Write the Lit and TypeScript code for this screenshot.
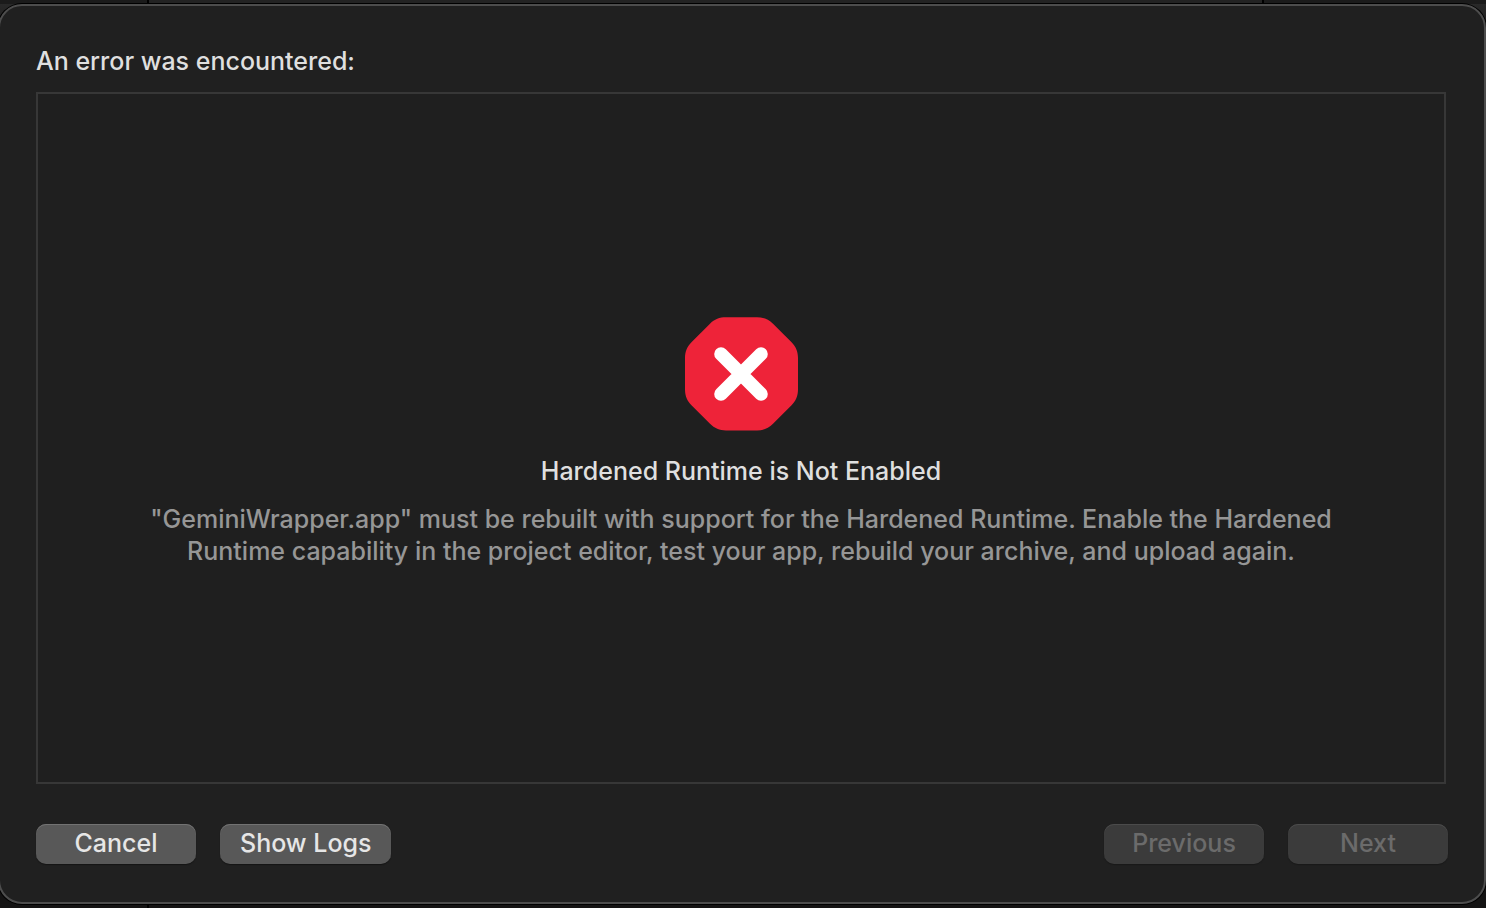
import { LitElement, html, css } from "lit";
import { customElement, property } from "lit/decorators.js";

@customElement("error-badge")
class ErrorBadge extends LitElement {
  static styles = css`
    :host {
      display: block;
      width: 114px;
      height: 114px;
    }
    .badge {
      display: block;
      width: 100%;
      height: 100%;
    }
  `;

  render() {
    return html`
      <svg class="badge" viewBox="0 0 114 114" role="img" aria-label="Error">
        <path
          fill="#ee2339"
          d="M42 0.3H73C79.5 0.3 84.5 2.2 89 6.7L107.3 25C111.8 29.5 114 34.5 114 41V72.5C114 79 111.8 84 107.3 88.5L89 106.8C84.5 111.3 79.5 113.4 73 113.4H42C35.5 113.4 30.5 111.3 26 106.8L7.7 88.5C3.2 84 1 79 1 72.5V41C1 34.5 3.2 29.5 7.7 25L26 6.7C30.5 2.2 35.5 0.3 42 0.3Z"
        />
        <path d="M37 37L77 77M77 37L37 77" stroke="#fff" stroke-width="13.6" stroke-linecap="round" />
      </svg>
    `;
  }
}

@customElement("app-root")
class AppRoot extends LitElement {
  @property() heading = "An error was encountered:";
  @property() issue = "Hardened Runtime is Not Enabled";
  @property() detail =
    '"GeminiWrapper.app" must be rebuilt with support for the Hardened Runtime. Enable the Hardened Runtime capability in the project editor, test your app, rebuild your archive, and upload again.';

  static styles = css`
    :host {
      display: flex;
      flex-direction: column;
      box-sizing: border-box;
      min-height: 100vh;
      padding: 4px 0;
      overflow: hidden;
      background:
        linear-gradient(#000, #000) 147px 0 / 2px 100% no-repeat,
        linear-gradient(#000, #000) calc(100% - 222px) 0 / 2px 4px no-repeat,
        linear-gradient(90deg, #1b1b1b 148px, #232323 148px calc(100% - 223px), #1b1b1b calc(100% - 223px)) 0 0 / 100% 4px no-repeat,
        linear-gradient(#2a2a2a, #141313 60px);
      color: #dfdfdf;
      font-family: Inter, "Liberation Sans", sans-serif;
      font-size: 25px;
      font-weight: 500;
      line-height: 32px;
    }
    .sheet {
      flex: 1;
      display: flex;
      flex-direction: column;
      margin-left: -2px;
      padding: 39px 36px 38px;
      border: 2px solid #4d4d4d;
      border-radius: 24px;
      background: #202020;
      box-shadow: 0 0 0 1px #000;
    }
    .heading {
      margin: 0 0 15px;
      font-size: inherit;
      font-weight: inherit;
    }
    .panel {
      flex: 1;
      display: flex;
      flex-direction: column;
      align-items: center;
      justify-content: center;
      margin-right: 2px;
      padding: 8px 96px 0;
      border: 2px solid #373737;
      background: #1f1f1f;
      text-align: center;
    }
    .issue {
      margin: 24px 0 16px;
      font-size: inherit;
      font-weight: inherit;
    }
    .detail {
      margin: 0;
      color: #969696;
    }
    .actions {
      display: flex;
      justify-content: space-between;
      margin-top: 40px;
    }
    .group {
      display: flex;
      gap: 24px;
    }
    .button {
      min-width: 160px;
      height: 40px;
      padding: 0 20px 2px;
      border: 0;
      border-radius: 10px;
      background: #585858;
      box-shadow: inset 0 1px 0 #727272, 0 1px 1px #151515;
      color: #e6e6e6;
      font: inherit;
    }
    .button:disabled {
      background: #3b3b3b;
      box-shadow: inset 0 1px 0 #4b4b4b, 0 1px 1px #191919;
      color: #6b6b6b;
    }
  `;

  render() {
    return html`
      <main class="sheet">
        <h1 class="heading">${this.heading}</h1>
        <section class="panel">
          <error-badge></error-badge>
          <h2 class="issue">${this.issue}</h2>
          <p class="detail">${this.detail}</p>
        </section>
        <footer class="actions">
          <div class="group">
            <button class="button" type="button">Cancel</button>
            <button class="button" type="button">Show Logs</button>
          </div>
          <div class="group">
            <button class="button" type="button" disabled>Previous</button>
            <button class="button" type="button" disabled>Next</button>
          </div>
        </footer>
      </main>
    `;
  }
}
